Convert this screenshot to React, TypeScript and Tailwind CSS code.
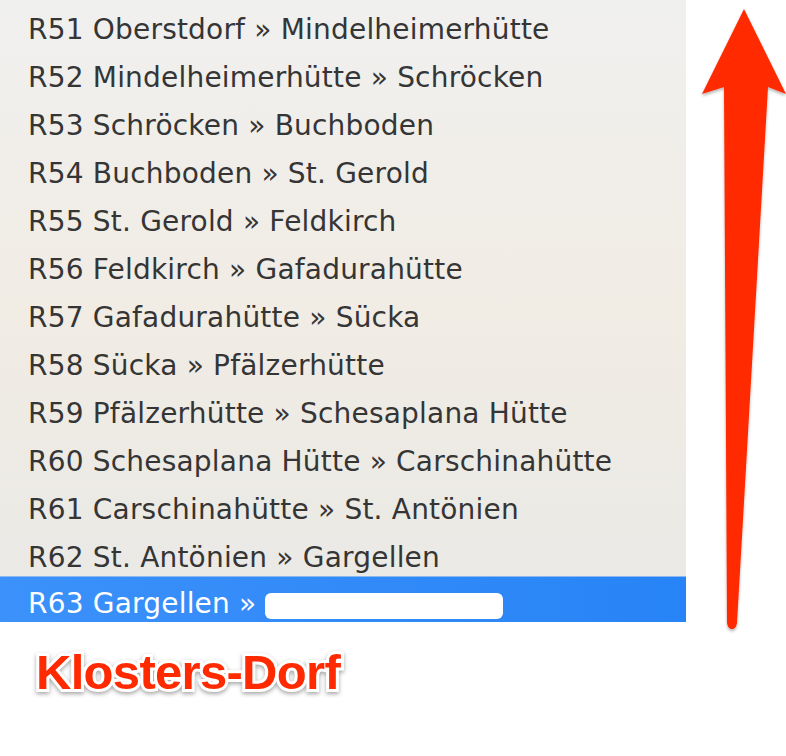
const routes = [
  'R51 Oberstdorf » Mindelheimerhütte',
  'R52 Mindelheimerhütte » Schröcken',
  'R53 Schröcken » Buchboden',
  'R54 Buchboden » St. Gerold',
  'R55 St. Gerold » Feldkirch',
  'R56 Feldkirch » Gafadurahütte',
  'R57 Gafadurahütte » Sücka',
  'R58 Sücka » Pfälzerhütte',
  'R59 Pfälzerhütte » Schesaplana Hütte',
  'R60 Schesaplana Hütte » Carschinahütte',
  'R61 Carschinahütte » St. Antönien',
  'R62 St. Antönien » Gargellen',
]

export default function App() {
  return (
    <div className="w-[786px] h-[756px] bg-white relative overflow-hidden">
      <div className="flex">
        {/* menu list */}
        <div className="w-[686px] h-[622px] flex flex-col bg-gradient-to-b from-[#f0f0ef] via-[#f1ece4] to-[#e9e9e6] font-['DejaVu_Sans',sans-serif] text-[28px] tracking-[0.2px] text-[#353535]">
          <div className="flex-1 flex flex-col">
            {routes.map((r) => (
              <div key={r} className="h-[48px] flex items-center pl-[28px] pt-[12px]">
                {r}
              </div>
            ))}
          </div>
          <div className="h-[46px] flex items-center pl-[28px] pt-[8px] bg-gradient-to-r from-[#3c91fa] to-[#2784f6] text-white border-t border-[#8ab8ef]">
            <span>R63 Gargellen »</span>
            <span className="ml-[9px] w-[238px] h-[26px] rounded-[6px] bg-white mt-[4px]" />
          </div>
        </div>
        <div className="flex-1" />
      </div>

      {/* arrow */}
      <svg className="absolute left-[686px] top-0" width="100" height="640" viewBox="0 0 100 640">
        <defs>
          <filter id="sh" x="-20%" y="-5%" width="140%" height="110%">
            <feDropShadow dx="0" dy="2" stdDeviation="1.5" floodColor="#000" floodOpacity="0.3" />
          </filter>
        </defs>
        <path
          d="M58 9 L100 94 L82 87 L51 623 Q50 629 46 629 Q42 629 41 623 L38 87 L16 94 Z"
          fill="#ff2a00"
          filter="url(#sh)"
        />
      </svg>

      <div className="pl-[36px] pt-[26px]">
        <span className="font-['Liberation_Sans',Arial,sans-serif] font-bold text-[49px] leading-none text-[#ff2a00] tracking-[-0.7px] [paint-order:stroke_fill] [-webkit-text-stroke:6px_white] [filter:drop-shadow(0_2px_2px_rgba(0,0,0,0.35))]">
          Klosters-Dorf
        </span>
      </div>
    </div>
  )
}
